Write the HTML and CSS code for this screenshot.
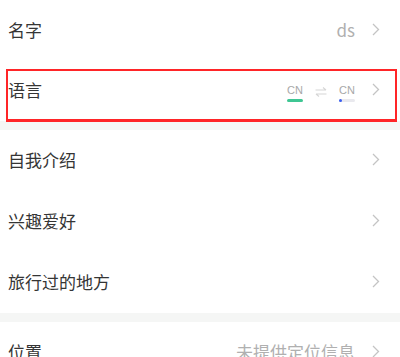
FILE: index.html
```html
<!DOCTYPE html>
<html lang="zh">
<head>
<meta charset="utf-8">
<link rel="stylesheet" href="styles.css">
</head>
<body>
<div class="list">
  <div class="row first">
    <span class="label">名字</span>
    <span class="value">ds</span>
    <svg class="chev" viewBox="0 0 8 13" width="8" height="13"><path d="M1 1 L6.5 6.5 L1 12" fill="none" stroke="#c4c4c4" stroke-width="1.3"/></svg>
  </div>
  <div class="row lang">
    <span class="label">语言</span>
    <div class="langs">
      <div class="cn">
        <span class="cn-text">CN</span>
        <span class="bar green"></span>
      </div>
      <svg class="swap" viewBox="0 0 12 10" width="12" height="10"><path d="M0.5 3 H11 M8 0.5 L11 3 M11.5 7 H1 M4 9.5 L1 7" fill="none" stroke="#d6d6d6" stroke-width="1.1"/></svg>
      <div class="cn">
        <span class="cn-text">CN</span>
        <span class="bar grey"><span class="dot"></span></span>
      </div>
    </div>
    <svg class="chev" viewBox="0 0 8 13" width="8" height="13"><path d="M1 1 L6.5 6.5 L1 12" fill="none" stroke="#c4c4c4" stroke-width="1.3"/></svg>
    <div class="highlight"></div>
  </div>
  <div class="band"></div>
  <div class="row">
    <span class="label">自我介绍</span>
    <svg class="chev" viewBox="0 0 8 13" width="8" height="13"><path d="M1 1 L6.5 6.5 L1 12" fill="none" stroke="#c4c4c4" stroke-width="1.3"/></svg>
  </div>
  <div class="row">
    <span class="label">兴趣爱好</span>
    <svg class="chev" viewBox="0 0 8 13" width="8" height="13"><path d="M1 1 L6.5 6.5 L1 12" fill="none" stroke="#c4c4c4" stroke-width="1.3"/></svg>
  </div>
  <div class="row">
    <span class="label">旅行过的地方</span>
    <svg class="chev" viewBox="0 0 8 13" width="8" height="13"><path d="M1 1 L6.5 6.5 L1 12" fill="none" stroke="#c4c4c4" stroke-width="1.3"/></svg>
  </div>
  <div class="band"></div>
  <div class="row">
    <span class="label">位置</span>
    <span class="value">未提供定位信息</span>
    <svg class="chev" viewBox="0 0 8 13" width="8" height="13"><path d="M1 1 L6.5 6.5 L1 12" fill="none" stroke="#c4c4c4" stroke-width="1.3"/></svg>
  </div>
</div>
</body>
</html>
```

FILE: styles.css
```css
html, body {
  margin: 0;
  padding: 0;
  background: #ffffff;
  overflow: hidden;
}
body {
  font-family: "Noto Sans CJK SC", "Noto Sans", sans-serif;
  width: 400px;
  height: 357px;
}
.list {
  display: flex;
  flex-direction: column;
}
.row {
  position: relative;
  display: flex;
  align-items: center;
  height: 61px;
  padding: 0 20px 2px 8px;
  box-sizing: border-box;
  flex-shrink: 0;
}
.row.first {
  height: 60px;
}
.label {
  flex: 1;
  font-size: 17px;
  color: #353535;
  line-height: 1;
}
.value {
  font-size: 17px;
  color: #b0b0b0;
  line-height: 1;
  margin-right: 17px;
}
.chev {
  display: block;
  flex-shrink: 0;
}
.band {
  height: 9px;
  background: #f5f6f5;
  flex-shrink: 0;
}
.langs {
  display: flex;
  align-items: center;
  gap: 12px;
  margin-right: 17px;
}
.cn {
  display: flex;
  flex-direction: column;
  align-items: center;
  gap: 3px;
  padding-top: 6px;
}
.cn-text {
  font-family: "Liberation Sans", Arial, sans-serif;
  font-size: 11px;
  color: #a8a8a8;
  line-height: 12px;
}
.bar {
  position: relative;
  display: block;
  width: 16px;
  height: 3px;
  border-radius: 2px;
}
.bar.green {
  background: #3fc693;
}
.bar.grey {
  background: #e9e9ee;
}
.dot {
  position: absolute;
  left: 0;
  top: 0;
  width: 3px;
  height: 3px;
  border-radius: 50%;
  background: #3a5ef0;
}
.swap {
  display: block;
  margin-top: 4px;
}
.highlight {
  position: absolute;
  left: 6px;
  right: 3px;
  top: 9px;
  height: 53px;
  border: 2px solid #ff2528;
  border-bottom-width: 3px;
  box-sizing: border-box;
  pointer-events: none;
}
```
